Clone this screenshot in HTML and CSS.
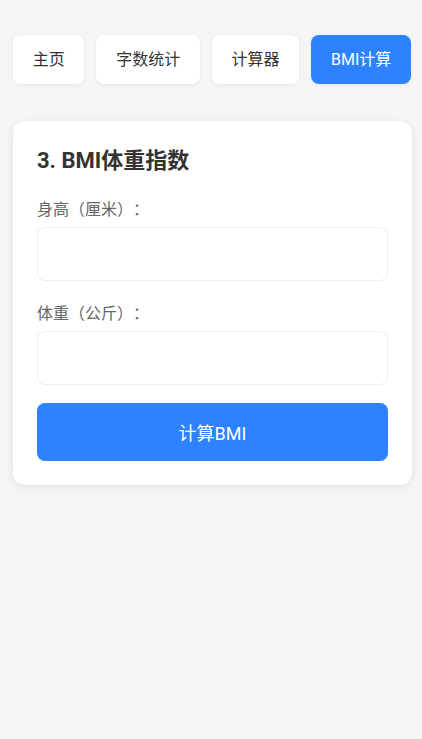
FILE: index.html
```html
<!DOCTYPE html>
<html lang="zh-CN">
<head>
  <meta charset="UTF-8" />
  <title>BMI计算</title>
  <link rel="stylesheet" href="styles.css">
</head>
<body>

  <div class="nav">
    <button class="nav-btn">主页</button>
    <button class="nav-btn">字数统计</button>
    <button class="nav-btn">计算器</button>
    <button class="nav-btn active">BMI计算</button>
  </div>

  <div class="card">
    <h3>3. BMI体重指数</h3>

    <label for="height">身高（厘米）：</label>
    <input type="number" id="height">

    <label for="weight">体重（公斤）：</label>
    <input type="number" id="weight">

    <button class="calc-btn">计算BMI</button>
  </div>

</body>
</html>
```

FILE: styles.css
```css
body {
  font-family: Roboto, "Noto Sans CJK SC", sans-serif;
  text-spacing-trim: space-all;
  background: #f5f5f5;
  padding: 35px 10px 35px 13px;
  margin: 0;
  color: #333;
}
.nav {
  display: flex;
  gap: 12px;
  margin-right: 1px;
  margin-bottom: 37px;
}
.nav-btn {
  flex: 1 1 auto;
  font-family: Roboto, "Noto Sans CJK SC", sans-serif;
  font-size: 16px;
  line-height: 25px;
  padding: 12px 19px;
  border: none;
  border-radius: 8px;
  background: white;
  color: #333;
  box-shadow: 0 1px 4px rgba(0,0,0,0.06);
}
.nav-btn.active {
  background: #2e82ff;
  color: white;
}
.card {
  background: white;
  border-radius: 12px;
  padding: 24px;
  box-shadow: 0 2px 10px rgba(0,0,0,0.08);
  display: flex;
  flex-direction: column;
}
h3 {
  font-size: 22px;
  line-height: 32px;
  margin: 0 0 21px;
  color: #333;
}
label {
  font-size: 16px;
  line-height: 24px;
  color: #666;
  margin-bottom: 5px;
}
input {
  height: 54px;
  box-sizing: border-box;
  border: 1px solid #eee;
  border-radius: 8px;
  padding: 0 12px;
  margin-bottom: 21px;
  font-size: 16px;
}
#weight {
  margin-bottom: 18px;
}
.calc-btn {
  font-family: Roboto, "Noto Sans CJK SC", sans-serif;
  height: 58px;
  border: none;
  border-radius: 8px;
  background: #2e82ff;
  color: white;
  font-size: 18px;
}
```
